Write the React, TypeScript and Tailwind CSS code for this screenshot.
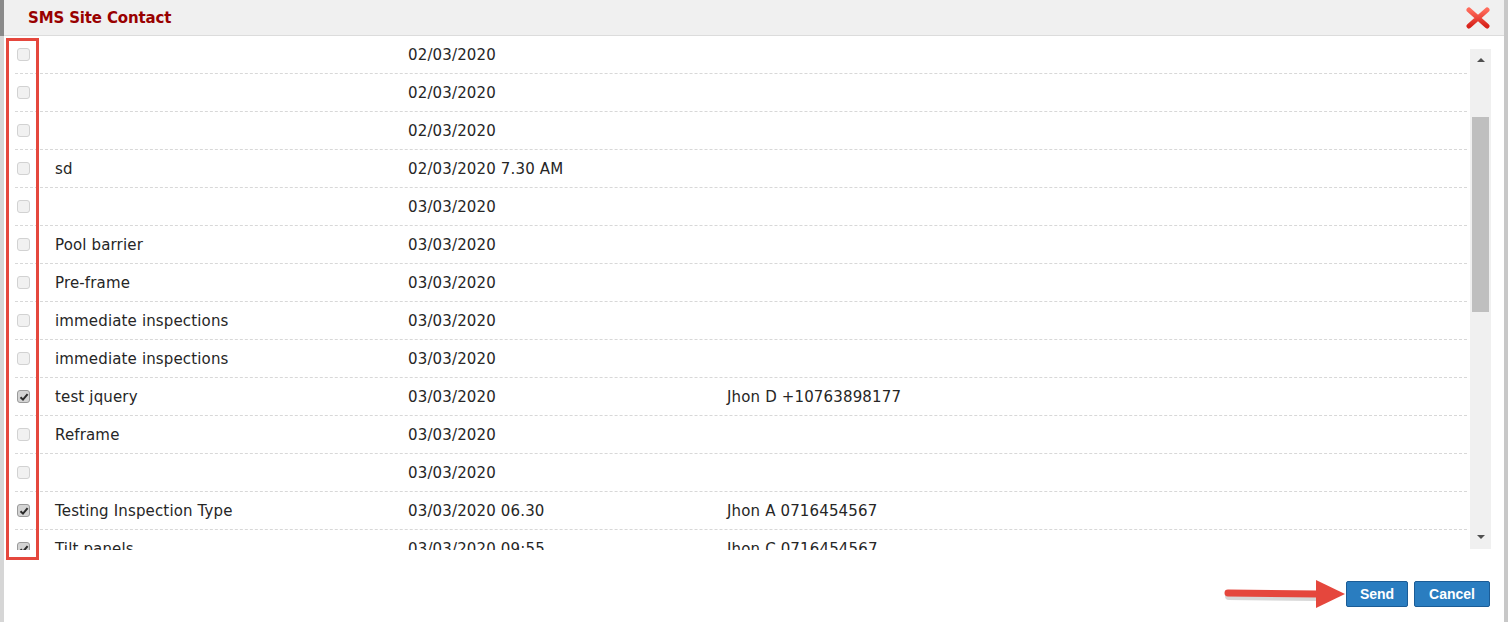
import React from 'react'

interface Row {
  name: string
  date: string
  contact: string
  checked: boolean
}

const rows: Row[] = [
  { name: '', date: '02/03/2020', contact: '', checked: false },
  { name: '', date: '02/03/2020', contact: '', checked: false },
  { name: '', date: '02/03/2020', contact: '', checked: false },
  { name: 'sd', date: '02/03/2020 7.30 AM', contact: '', checked: false },
  { name: '', date: '03/03/2020', contact: '', checked: false },
  { name: 'Pool barrier', date: '03/03/2020', contact: '', checked: false },
  { name: 'Pre-frame', date: '03/03/2020', contact: '', checked: false },
  { name: 'immediate inspections', date: '03/03/2020', contact: '', checked: false },
  { name: 'immediate inspections', date: '03/03/2020', contact: '', checked: false },
  { name: 'test jquery', date: '03/03/2020', contact: 'Jhon D +10763898177', checked: true },
  { name: 'Reframe', date: '03/03/2020', contact: '', checked: false },
  { name: '', date: '03/03/2020', contact: '', checked: false },
  { name: 'Testing Inspection Type', date: '03/03/2020 06.30', contact: 'Jhon A 0716454567', checked: true },
  { name: 'Tilt panels', date: '03/03/2020 09:55', contact: 'Jhon C 0716454567', checked: true },
]

const Checkbox: React.FC<{ checked: boolean }> = ({ checked }) => (
  <span
    className={`flex h-[13px] w-[13px] items-center justify-center rounded-[3px] border ${
      checked ? 'border-[#9a9a9a] bg-[#d4d4d4]' : 'border-[#d2d2d2] bg-[#f1f1f1]'
    }`}
  >
    {checked && (
      <svg width="10" height="10" viewBox="0 0 10 10">
        <path d="M1.5 5.2 L4 7.6 L8.6 2.2" fill="none" stroke="#2b2b2b" strokeWidth="2" />
      </svg>
    )}
  </span>
)

const App: React.FC = () => {
  return (
    <div className="relative flex h-[622px] w-[1508px] overflow-hidden bg-[#cfcfcf] font-['DejaVu_Sans',Verdana,sans-serif] text-[#262626]">
      {/* page behind the dialog */}
      <div className="flex w-[4px] shrink-0 flex-col bg-[#d6d6d6]">
        <div className="h-[36px] bg-[#8a8a8a]" />
      </div>

      <div className="flex w-[1500px] shrink-0 flex-col bg-white">
        {/* header */}
        <div className="flex h-[36px] shrink-0 items-center justify-between border-b border-[#dcdcdc] bg-[#f0f0f0] pl-[24px] pr-[14px]">
          <span className="pt-[2px] text-[15px] font-bold tracking-[-0.15px] text-[#990000]">
            SMS Site Contact
          </span>
          <svg width="24" height="22" viewBox="0 0 24 22">
            <defs>
              <linearGradient id="xg" x1="0" y1="0" x2="0" y2="1">
                <stop offset="0" stopColor="#ff6a5a" />
                <stop offset="1" stopColor="#d8231b" />
              </linearGradient>
            </defs>
            <path
              d="M3 3 L12 11 L21 3 M3 19 L12 11 L21 19"
              fill="none"
              stroke="url(#xg)"
              strokeWidth="5"
              strokeLinecap="round"
            />
          </svg>
        </div>

        {/* body */}
        <div className="flex h-[514px] shrink-0">
          <div className="ml-[11px] w-[1452px] overflow-hidden">
            {rows.map((r, i) => (
              <div
                key={i}
                className="flex h-[38px] items-center border-b border-dashed border-[#d8d8d8] text-[15px] tracking-[0.15px]"
              >
                <div className="w-[40px] pl-[2px]">
                  <Checkbox checked={r.checked} />
                </div>
                <div className="w-[353px] pt-[2px]">{r.name}</div>
                <div className="w-[319px] pt-[2px]">{r.date}</div>
                <div className="pt-[2px]">{r.contact}</div>
              </div>
            ))}
          </div>

          {/* scrollbar */}
          <div className="ml-[3px] mt-[13px] flex h-[500px] w-[21px] flex-col items-center bg-[#f0f0f0]">
            <div className="flex h-[22px] items-center justify-center">
              <span className="h-0 w-0 border-x-[4px] border-b-[4px] border-x-transparent border-b-[#505050]" />
            </div>
            <div className="mt-[46px] h-[195px] w-[17px] bg-[#bfbfbf]" />
            <div className="flex-1" />
            <div className="flex h-[24px] items-center justify-center">
              <span className="h-0 w-0 border-x-[4px] border-t-[4px] border-x-transparent border-t-[#505050]" />
            </div>
          </div>
        </div>

        {/* footer */}
        <div className="flex flex-1 items-start justify-end gap-[6px] pr-[14px] pt-[31px]">
          <button className="h-[26px] w-[62px] rounded-[2px] border border-[#1b5c96] bg-[#2a7dc0] font-['Liberation_Sans',Arial,sans-serif] text-[14px] font-bold text-white">
            Send
          </button>
          <button className="h-[26px] w-[76px] rounded-[2px] border border-[#1b5c96] bg-[#2a7dc0] font-['Liberation_Sans',Arial,sans-serif] text-[14px] font-bold text-white">
            Cancel
          </button>
        </div>
      </div>

      <div className="w-[4px] shrink-0 bg-[#c8c8c8]" />

      {/* annotation: red box around checkboxes */}
      <div className="absolute left-[6px] top-[38px] h-[522px] w-[33px] border-[3px] border-[#e5473d]" />

      {/* annotation: arrow pointing to Send */}
      <svg className="absolute left-[1222px] top-[578px]" width="126" height="34" viewBox="0 0 126 34">
        <path d="M6 16 L96 17" stroke="#b0b0b0" strokeWidth="8" strokeLinecap="round" opacity="0.5" transform="translate(1 2)" />
        <path d="M6 15 L96 16" stroke="#e5473d" strokeWidth="7" strokeLinecap="round" />
        <path d="M94 2 L123 16 L94 30 Z" fill="#e5473d" />
      </svg>
    </div>
  )
}

export default App
